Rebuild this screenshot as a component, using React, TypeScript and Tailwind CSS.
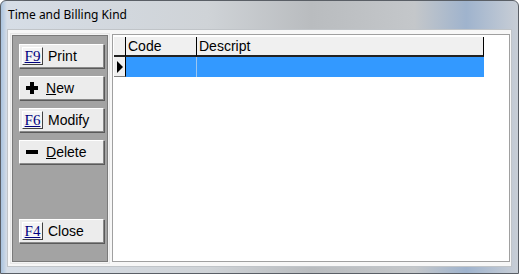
import React from "react";

function KeyCap({ k }: { k: string }) {
  return (
    <span
      className="inline-flex items-center justify-center h-[18px] w-[21px] text-[15px] leading-none text-[#000080] bg-[#f4f4f4] border-b border-r border-[#404040] border-t border-l border-t-white border-l-white"
      style={{ fontFamily: '"Liberation Serif", serif' }}
    >
      <span className="underline decoration-[#000080]">{k}</span>
    </span>
  );
}

function Btn({ children, className = "" }: { children: React.ReactNode; className?: string }) {
  return (
    <div
      className={
        "w-[85px] h-[24px] flex items-center pl-[2px] gap-[5px] bg-[#ececec] border border-t-white border-l-white border-b-[#8a8a8a] border-r-[#8a8a8a] shadow-[1px_1px_0_#5a5a5a] text-[14px] text-black " +
        className
      }
      style={{ fontFamily: '"Liberation Sans", Arial, sans-serif' }}
    >
      {children}
    </div>
  );
}

export default function App() {
  return (
    <div
      className="relative w-[519px] h-[274px] overflow-hidden rounded-t-[6px] border border-[#5a5f66]"
      style={{
        background:
          "linear-gradient(90deg,#a9c3df 0px,#d6dde6 6px,#cfd3d7 40%,#b9bcbf 60%,#c4c7ca 80%,#9fb3cd 90%,#c8ced6 100%)",
      }}
    >
      <div className="h-[28px] flex items-center pl-[7px]">
        <span
          className="text-[12px] text-black"
          style={{ fontFamily: '"Noto Sans", "Liberation Sans", sans-serif' }}
        >
          Time and Billing Kind
        </span>
      </div>
      <div className="mx-[6px] h-[238px] bg-[#f7f7f7] border border-[#c0c4c8] flex pt-[3px] pl-[2px] pr-[1px] pb-[1px] gap-[2px]">
        <div className="w-[100px] h-[231px] border border-[#e8e8e8] p-[1px] bg-[#f4f4f4]">
          <div className="w-full h-full bg-[#a3a3a3] border border-[#7a7a7a] flex flex-col items-start pl-[6px] pt-[8px]">
            <Btn>
              <KeyCap k="F9" />
              <span>Print</span>
            </Btn>
            <Btn className="mt-[8px]">
              <svg width="12" height="12" viewBox="0 0 12 12" className="ml-[4px] mr-[3px]">
                <rect x="4" y="0" width="4" height="12" fill="#000" />
                <rect x="0" y="4" width="12" height="4" fill="#000" />
              </svg>
              <span>
                <span className="underline">N</span>ew
              </span>
            </Btn>
            <Btn className="mt-[8px]">
              <KeyCap k="F6" />
              <span>Modify</span>
            </Btn>
            <Btn className="mt-[8px]">
              <svg width="12" height="12" viewBox="0 0 12 12" className="ml-[4px] mr-[3px]">
                <rect x="0" y="4" width="12" height="4" fill="#000" />
              </svg>
              <span>
                <span className="underline">D</span>elete
              </span>
            </Btn>
            <Btn className="mt-[55px]">
              <KeyCap k="F4" />
              <span>Close</span>
            </Btn>
          </div>
        </div>
        <div className="flex-1 h-[228px] mt-[1px] bg-white border border-[#a0a0a0] pt-[2px] pl-[1px]">
          <div
            className="flex h-[20px] text-[14px] text-black"
            style={{ fontFamily: '"Liberation Sans", Arial, sans-serif' }}
          >
            <div className="w-[12px] bg-[#f0f0f0] border-r border-b-2 border-r-[#000] border-b-[#222]" />
            <div className="w-[71px] bg-[#f0f0f0] border-r border-b-2 border-r-[#000] border-b-[#222] pl-[2px] leading-[18px]">
              Code
            </div>
            <div className="w-[287px] bg-[#f0f0f0] border-r border-b-2 border-r-[#000] border-b-[#222] pl-[2px] leading-[18px]">
              Descript
            </div>
          </div>
          <div className="flex h-[20px]">
            <div className="w-[12px] bg-[#f0f0f0] border-r border-b border-r-[#000] border-b-[#808080] flex items-center justify-center">
              <svg width="6" height="12" viewBox="0 0 6 12">
                <path d="M0 0 L6 6 L0 12 Z" fill="#000" />
              </svg>
            </div>
            <div className="w-[71px] bg-[#3399ff] border-r border-r-[#9cc6f0]" />
            <div className="w-[287px] bg-[#3399ff]" />
          </div>
        </div>
      </div>
    </div>
  );
}
